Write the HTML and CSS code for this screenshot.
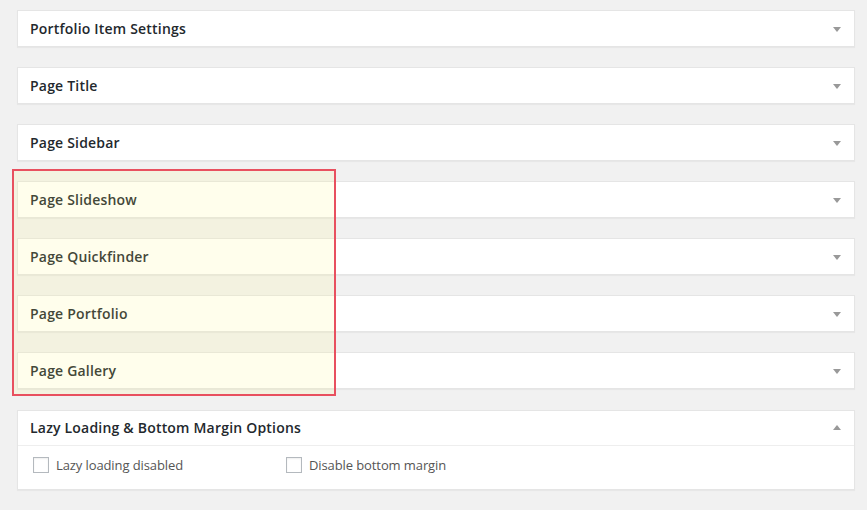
FILE: index.html
```html
<!DOCTYPE html>
<html>
<head>
<meta charset="utf-8">
<link rel="stylesheet" href="styles.css">
</head>
<body>
<div class="wrap">
  <div class="postbox"><div class="hndle"><span>Portfolio Item Settings</span><i class="arrow down"></i></div></div>
  <div class="postbox"><div class="hndle"><span>Page Title</span><i class="arrow down"></i></div></div>
  <div class="postbox"><div class="hndle"><span>Page Sidebar</span><i class="arrow down"></i></div></div>
  <div class="postbox"><div class="hndle"><span>Page Slideshow</span><i class="arrow down"></i></div></div>
  <div class="postbox"><div class="hndle"><span>Page Quickfinder</span><i class="arrow down"></i></div></div>
  <div class="postbox"><div class="hndle"><span>Page Portfolio</span><i class="arrow down"></i></div></div>
  <div class="postbox"><div class="hndle"><span>Page Gallery</span><i class="arrow down"></i></div></div>
  <div class="postbox open">
    <div class="hndle"><span>Lazy Loading &amp; Bottom Margin Options</span><i class="arrow up"></i></div>
    <div class="inside">
      <label class="opt"><span class="cb"></span>Lazy loading disabled</label>
      <label class="opt"><span class="cb"></span>Disable bottom margin</label>
    </div>
  </div>
  <div class="highlight"></div>
</div>
</body>
</html>
```

FILE: styles.css
```css
html, body {
  margin: 0;
  padding: 0;
  background: #f1f1f1;
}
body {
  font-family: "Open Sans", "Noto Sans", sans-serif;
  color: #23282d;
}
.wrap {
  position: relative;
  padding: 10px 12px 0 17px;
}
.postbox {
  background: #fff;
  border: 1px solid #e5e5e5;
  box-shadow: 0 1px 1px rgba(0,0,0,0.04);
  margin-bottom: 20px;
}
.postbox.open {
  margin-top: 21px;
}
.hndle {
  display: flex;
  justify-content: space-between;
  align-items: center;
  padding: 8px 13px 8px 12px;
  font-size: 14px;
  line-height: 19px;
  font-weight: 600;
  letter-spacing: 0.2px;
  color: #23282d;
}
.open .hndle {
  padding-top: 7px;
  padding-bottom: 8px;
  border-bottom: 1px solid #eee;
}
.arrow {
  display: block;
  width: 0;
  height: 0;
  border-left: 4px solid transparent;
  border-right: 4px solid transparent;
}
.arrow.down {
  border-top: 5px solid #999;
  margin-top: 1px;
}
.arrow.up {
  border-bottom: 5px solid #999;
}
.inside {
  display: flex;
  padding: 11px 15px 16px;
}
.opt {
  display: flex;
  align-items: center;
  width: 253px;
  font-size: 13px;
  line-height: 16px;
  letter-spacing: -0.1px;
  color: #555;
}
.cb {
  display: inline-block;
  width: 14px;
  height: 14px;
  border: 1px solid #b4b9be;
  box-shadow: inset 0 1px 2px rgba(0,0,0,0.07);
  margin-right: 7px;
  background: #fff;
}
.highlight {
  position: absolute;
  left: 12px;
  top: 169px;
  width: 320px;
  height: 223px;
  border: 2px solid #e8505f;
  background: rgba(255, 248, 128, 0.15);
}
```
